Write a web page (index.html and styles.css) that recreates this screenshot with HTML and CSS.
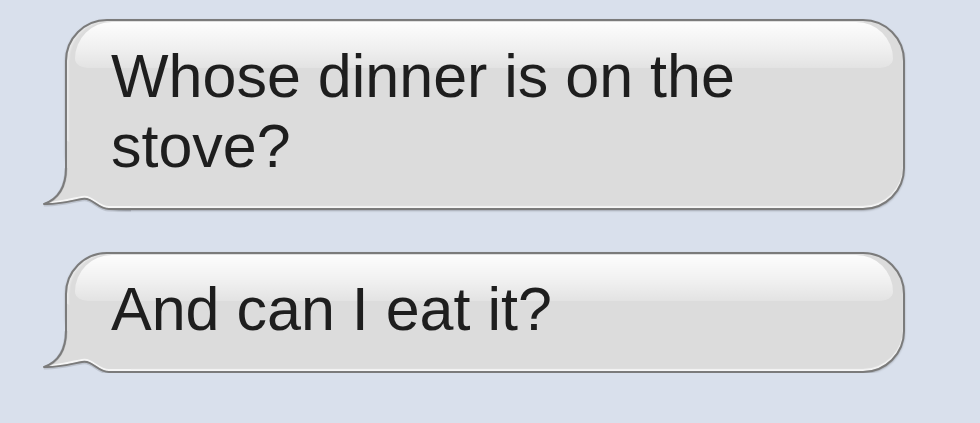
FILE: index.html
```html
<!DOCTYPE html>
<html>
  <head>
    <meta charset="utf-8">
    <meta name="viewport" content="width=device-width, initial-scale=1">
    <title>Messages</title>
    <link rel="stylesheet" href="styles.css">
  </head>
  <body>
    <div class="thread">
      <div class="bubble">
        <svg class="tail" width="90" height="70" viewBox="0 0 90 70">
          <path class="tail-fill" d="M25 0 L25 28 C25 48 17 59 3 64 C14 65 30 61 41 59 C52 57 56 69 68 69 L90 69 L90 40 Z"/>
          <path class="tail-shine" d="M8 63 C18 62 30 59 41 57 C52 55 56 67 68 67 L90 67"/>
          <path class="tail-shadow" d="M25 28 C25 48 17 59 3 65 C14 66 30 62 41 60 C52 58 56 70 68 70 L90 70"/>
          <path class="tail-line" d="M25 0 L25 28 C25 48 17 59 3 64 C14 65 30 61 41 59 C52 57 56 69 68 69 L90 69"/>
        </svg>
        <p class="text">Whose dinner is on the stove?</p>
      </div>
      <div class="bubble">
        <svg class="tail" width="90" height="70" viewBox="0 0 90 70">
          <path class="tail-fill" d="M25 0 L25 28 C25 48 17 59 3 64 C14 65 30 61 41 59 C52 57 56 69 68 69 L90 69 L90 40 Z"/>
          <path class="tail-shine" d="M8 63 C18 62 30 59 41 57 C52 55 56 67 68 67 L90 67"/>
          <path class="tail-shadow" d="M25 28 C25 48 17 59 3 65 C14 66 30 62 41 60 C52 58 56 70 68 70 L90 70"/>
          <path class="tail-line" d="M25 0 L25 28 C25 48 17 59 3 64 C14 65 30 61 41 59 C52 57 56 69 68 69 L90 69"/>
        </svg>
        <p class="text">And can I eat it?</p>
      </div>
    </div>
  </body>
</html>
```

FILE: styles.css
```css
* {
  box-sizing: border-box;
}

body {
  margin: 0;
  background: #d9e0ec;
  font-family: "Liberation Sans", Arial, sans-serif;
}

.thread {
  display: flex;
  flex-direction: column;
  gap: 42px;
  padding: 19px 75px 0 65px;
}

.bubble {
  position: relative;
  padding: 20px 40px 27px 44px;
  border: 2px solid #7b7b7b;
  border-radius: 42px 42px 42px 60px;
  background: #dcdcdc;
  box-shadow: 0 1px 2px rgba(0, 0, 0, 0.25), inset 0 -2px 1px rgba(255, 255, 255, 0.7), inset 2px 0 2px rgba(255, 255, 255, 0.4);
}

/* glossy highlight on the top half */
.bubble::before {
  content: "";
  position: absolute;
  top: 1px;
  left: 8px;
  right: 10px;
  height: 46px;
  border-radius: 40px 40px 14px 14px / 40px 40px 10px 10px;
  background: linear-gradient(rgba(255, 255, 255, 0.95), rgba(255, 255, 255, 0.55) 60%, rgba(255, 255, 255, 0.2));
}

.tail {
  position: absolute;
  left: -26px;
  bottom: -2px;
  overflow: visible;
}

.tail-fill {
  fill: #dcdcdc;
}

.tail-shine {
  fill: none;
  stroke: rgba(255, 255, 255, 0.75);
  stroke-width: 2;
}

.tail-shadow {
  fill: none;
  stroke: rgba(0, 0, 0, 0.12);
  stroke-width: 3;
}

.tail-line {
  fill: none;
  stroke: #7b7b7b;
  stroke-width: 2;
  stroke-linejoin: round;
}

.text {
  position: relative;
  margin: 0;
  font-size: 61px;
  line-height: 70px;
  color: #1e1e1e;
}
```
